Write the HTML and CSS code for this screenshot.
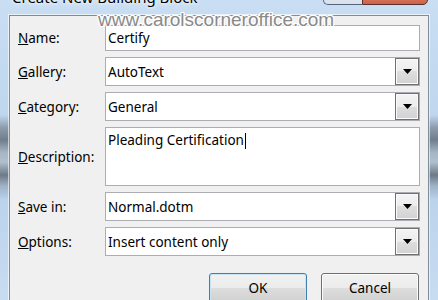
FILE: index.html
```html
<!DOCTYPE html>
<html>
<head>
<meta charset="utf-8">
<link rel="stylesheet" href="styles.css">
</head>
<body>
<div class="window">
  <div class="titlebar">
    <span class="title">Create New Building Block</span>
    <div class="caption">
      <span class="cb-help"></span>
      <span class="cb-close"></span>
    </div>
  </div>
  <div class="client">
    <div class="form">
      <span class="label"><u>N</u>ame:</span>
      <div class="field">Certify</div>

      <span class="label"><u>G</u>allery:</span>
      <div class="field select">AutoText<span class="dd"><svg width="9" height="5" viewBox="0 0 9 5"><polygon points="0,0 9,0 4.5,5" fill="#000"/></svg></span></div>

      <span class="label"><u>C</u>ategory:</span>
      <div class="field select">General<span class="dd"><svg width="9" height="5" viewBox="0 0 9 5"><polygon points="0,0 9,0 4.5,5" fill="#000"/></svg></span></div>

      <span class="label"><u>D</u>escription:</span>
      <div class="field area">Pleading Certification<span class="caret"></span></div>

      <span class="label"><u>S</u>ave in:</span>
      <div class="field select">Normal.dotm<span class="dd"><svg width="9" height="5" viewBox="0 0 9 5"><polygon points="0,0 9,0 4.5,5" fill="#000"/></svg></span></div>

      <span class="label"><u>O</u>ptions:</span>
      <div class="field select">Insert content only<span class="dd"><svg width="9" height="5" viewBox="0 0 9 5"><polygon points="0,0 9,0 4.5,5" fill="#000"/></svg></span></div>
    </div>
    <div class="buttons">
      <div class="btn btn-default">OK</div>
      <div class="btn">Cancel</div>
    </div>
  </div>
  <div class="watermark">www.carolscorneroffice.com</div>
</div>
</body>
</html>
```
FILE: styles.css
```css
* { box-sizing: border-box; }
html, body { margin: 0; padding: 0; }
body {
  width: 438px;
  height: 300px;
  overflow: hidden;
  font-family: "Noto Sans", "Open Sans", sans-serif;
  font-size: 13.5px;
  color: #000;
}
.window {
  position: relative;
  width: 438px;
  height: 300px;
  padding: 0 9px;
  background: linear-gradient(180deg, #c9def3 0px, #bfd6ee 115px, #8c9bab 128px, #707e8c 140px, #a8b7c6 153px, #b0bfcd 162px, #6d7a87 175px, #9fb2c6 186px, #bcd3ec 200px, #c8dcf1 300px);
}
.titlebar {
  height: 15px;
  display: flex;
  align-items: flex-start;
  padding: 0 1px 0 3px;
}
.title {
  margin-top: -13px;
  font-size: 15px;
  line-height: 20px;
  white-space: nowrap;
  text-shadow: 0 0 6px #fff, 0 0 3px #fff;
}
.caption {
  margin-left: auto;
  margin-top: -16px;
  height: 21px;
  display: flex;
}
.cb-help {
  width: 39px;
  border: 1px solid #56667a;
  border-right: none;
  border-radius: 0 0 0 5px;
  background: linear-gradient(#f2f6fa, #d6e0eb);
}
.cb-close {
  width: 66px;
  border: 1px solid #5b2f29;
  border-radius: 0 0 5px 0;
  background: linear-gradient(#eab0a2, #d87a64 60%, #cc6149);
}
.client {
  height: 285px;
  background: #f0f0f0;
  border: 1px solid #7f8d9b;
  border-bottom: none;
  box-shadow: 0 0 0 1px rgba(255,255,255,0.6);
}
.form {
  display: grid;
  grid-template-columns: 87px 315px;
  grid-template-rows: 26px 29px 29px 59px 29px 29px;
  row-gap: 6px;
  padding: 9px 8px 0 8px;
}
.label {
  display: flex;
  align-items: center;
  white-space: nowrap;
}
.field {
  display: flex;
  align-items: center;
  border: 1px solid #abadb3;
  background: #fff;
  padding-left: 2px;
  white-space: nowrap;
}
.select .dd {
  margin-left: auto;
  width: 24px;
  height: 100%;
  border: 1px solid #707070;
  background: linear-gradient(#f4f4f4 0%, #ececec 50%, #dedede 50%, #d2d2d2 100%);
  box-shadow: inset 0 0 0 1px #fbfbfb;
  display: flex;
  align-items: center;
  justify-content: center;
}
.dd svg { display: block; }
.area {
  align-items: flex-start;
  padding-top: 2px;
  line-height: 20px;
}
.caret {
  display: inline-block;
  width: 1px;
  height: 16px;
  background: #000;
  margin-left: 1px;
}
.area .caret { align-self: flex-start; margin-top: 3px; }
.buttons {
  display: flex;
  justify-content: flex-end;
  gap: 14px;
  margin-top: 17px;
  padding-right: 9px;
}
.btn {
  width: 98px;
  height: 31px;
  border: 1px solid #707070;
  border-radius: 3px;
  background: linear-gradient(#f2f2f2 0%, #ebebeb 50%, #dddddd 50%, #cfcfcf 100%);
  box-shadow: inset 0 0 0 1px #fcfcfc;
  text-align: center;
  line-height: 29px;
}
.btn-default {
  border-color: #3c7fb1;
  box-shadow: inset 0 0 0 1px #c6e6f8;
}
.watermark {
  position: absolute;
  left: 98px;
  top: 12px;
  font-family: "Liberation Sans", Arial, sans-serif;
  font-size: 19px;
  line-height: 16px;
  color: #8a8a8a;
  white-space: nowrap;
  text-shadow: 1px 0 0 #fff, -1px 0 0 #fff, 0 1px 0 #fff, 0 -1px 0 #fff, 1px 1px 0 #fff, -1px -1px 0 #fff, 1px -1px 0 #fff, -1px 1px 0 #fff;
}
```
